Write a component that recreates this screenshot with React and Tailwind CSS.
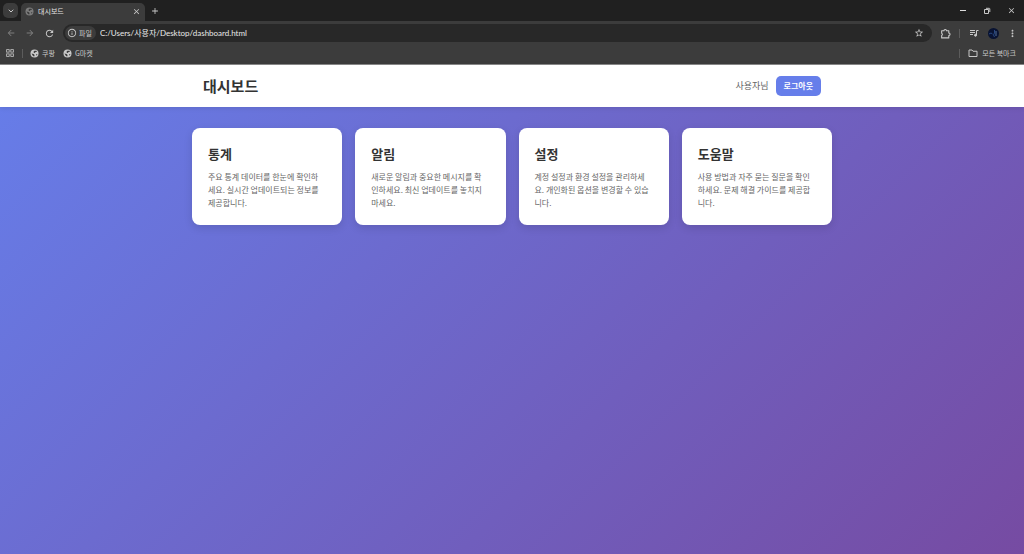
import { FiChevronDown } from 'react-icons/fi'
import {
  MdAdd,
  MdArrowBack,
  MdArrowForward,
  MdClose,
  MdInfoOutline,
  MdMoreVert,
  MdOutlineGridView,
  MdRefresh,
  MdStarBorder,
} from 'react-icons/md'

const CARDS = [
  {
    title: '통계',
    body: '주요 통계 데이터를 한눈에 확인하세요. 실시간 업데이트되는 정보를 제공합니다.',
  },
  {
    title: '알림',
    body: '새로운 알림과 중요한 메시지를 확인하세요. 최신 업데이트를 놓치지 마세요.',
  },
  {
    title: '설정',
    body: '계정 설정과 환경 설정을 관리하세요. 개인화된 옵션을 변경할 수 있습니다.',
  },
  {
    title: '도움말',
    body: '사용 방법과 자주 묻는 질문을 확인하세요. 문제 해결 가이드를 제공합니다.',
  },
]

const BOOKMARKS = ['쿠팡', 'G마켓']

function GlobeIcon({ className }) {
  return (
    <svg viewBox="0 0 18 18" className={className}>
      <circle cx="9" cy="9" r="8" fill="currentColor" />
      <path d="M9 3.5l4-.2 1 2-3 .7-1.2 2-2.2-.5-.6-2zM3 9l4.2 1 2 2-.8 3-2.4-1.2z" fill="#3c3c3c" />
      <path d="M12 10.5l2.8-.5-1.5 3.5z" fill="#3c3c3c" />
    </svg>
  )
}

function ExtensionIcon({ className }) {
  return (
    <svg viewBox="0 0 20 20" className={className} fill="none" stroke="currentColor" strokeWidth="2" strokeLinejoin="round">
      <path d="M3 5h4.2a2.3 2.3 0 0 1 4.6 0H16v4.2a2.3 2.3 0 0 1 0 4.6V18H3v-4.4a2.3 2.3 0 0 0 0-4.2z" />
    </svg>
  )
}

function MediaIcon({ className }) {
  return (
    <svg viewBox="0 0 20 20" className={className} fill="none" stroke="currentColor" strokeWidth="2">
      <path d="M2 5h10M2 9h10M2 13h6M15 14.5V5h4" />
      <circle cx="13" cy="14.5" r="2" fill="currentColor" />
    </svg>
  )
}

function FolderIcon({ className }) {
  return (
    <svg viewBox="0 0 20 20" className={className} fill="none" stroke="currentColor" strokeWidth="2" strokeLinejoin="round">
      <path d="M2 4h6l2 2.5h8V17H2z" />
    </svg>
  )
}

function TabStrip() {
  return (
    <div className="flex h-[21px] items-end bg-[#202020]">
      <button aria-label="탭 검색" className="mb-[3px] ml-[3px] flex size-[15px] items-center justify-center rounded-[5px] bg-[#3c3c3c]">
        <FiChevronDown className="size-2" strokeWidth={3} />
      </button>
      <div className="ml-[3px] flex h-[18px] w-[124px] items-center rounded-t-[5px] bg-[#3c3c3c] pr-1 pb-[2px] pl-1">
        <GlobeIcon className="size-[9px] text-[#7c7c7c]" />
        <span className="ml-1 flex-1 text-[7px] text-[#e3e3e3]">대시보드</span>
        <button aria-label="탭 닫기">
          <MdClose className="size-[9px]" />
        </button>
      </div>
      <button aria-label="새 탭" className="mb-[5px] ml-[5px]">
        <MdAdd className="size-[10px]" />
      </button>
      <div className="ml-auto flex h-full items-center gap-4 pr-2">
        <button aria-label="최소화" className="flex size-2 items-center justify-center">
          <span className="h-px w-[6px] bg-[#dddddd]" />
        </button>
        <button aria-label="이전 크기로 복원">
          <svg viewBox="0 0 8 8" className="size-2" fill="none" stroke="currentColor">
            <path d="M1.5 2.5h4v4h-4zM3 1.3h3.2q.6 0 .6.6V5" />
          </svg>
        </button>
        <button aria-label="닫기">
          <MdClose className="size-[9px]" />
        </button>
      </div>
    </div>
  )
}

function Toolbar() {
  return (
    <div className="flex h-6 items-center bg-[#3c3c3c] pr-[6px] pl-[6px]">
      <button aria-label="뒤로" className="text-[#7d7d7d]">
        <MdArrowBack className="size-[10px]" />
      </button>
      <button aria-label="앞으로" className="ml-[9px] text-[#7d7d7d]">
        <MdArrowForward className="size-[10px]" />
      </button>
      <button aria-label="새로고침" className="ml-[9px]">
        <MdRefresh className="size-[11px]" />
      </button>
      <div className="ml-2 flex h-[18px] flex-1 items-center rounded-full bg-[#282828] pr-2 pl-[2px]">
        <span className="flex h-[14px] items-center gap-[2px] rounded-full bg-[#3c3c3c] pr-1 pl-[2px] text-[7px]">
          <MdInfoOutline className="size-[10px]" />
          파일
        </span>
        <input
          aria-label="주소창"
          defaultValue="C:/Users/사용자/Desktop/dashboard.html"
          className="ml-1 min-w-0 flex-1 bg-transparent font-[Lato,'Noto_Sans_CJK_KR',sans-serif] text-[8px] text-[#e8e8e8] outline-none"
        />
        <button aria-label="북마크에 추가">
          <MdStarBorder className="size-[10px]" />
        </button>
      </div>
      <button aria-label="확장 프로그램" className="ml-2">
        <ExtensionIcon className="size-[11px]" />
      </button>
      <span className="ml-2 h-[9px] w-px bg-[#5c5c5c]" />
      <button aria-label="미디어 제어" className="ml-[9px]">
        <MediaIcon className="size-[10px]" />
      </button>
      <button aria-label="프로필" className="ml-[9px]">
        <svg viewBox="0 0 11 11" className="size-[11px]">
          <circle cx="5.5" cy="5.5" r="5.5" fill="#091332" />
          <path d="M1 6l2-1 1.5 1M6.5 2v3l-1 2 1 2" fill="none" stroke="#284780" />
          <path d="M8 3v5" stroke="#527099" />
        </svg>
      </button>
      <button aria-label="메뉴" className="ml-2">
        <MdMoreVert className="size-[11px]" />
      </button>
    </div>
  )
}

function BookmarkBar() {
  return (
    <div className="flex h-5 items-center border-b border-[#8a8a8a] bg-[#3c3c3c] pr-2 pb-[3px] pl-[5px] text-[7px]">
      <button aria-label="앱">
        <MdOutlineGridView className="size-[10px]" />
      </button>
      <span className="ml-[7px] h-[9px] w-px bg-[#5c5c5c]" />
      <nav className="ml-[7px] flex gap-2">
        {BOOKMARKS.map(name => (
          <a key={name} href="#" className="flex items-center gap-[3px]">
            <GlobeIcon className="size-[9px]" />
            {name}
          </a>
        ))}
      </nav>
      <span className="ml-auto h-[9px] w-px bg-[#5c5c5c]" />
      <button className="ml-2 flex items-center gap-[4px]">
        <FolderIcon className="size-[10px]" />
        모든 북마크
      </button>
    </div>
  )
}

function Card({ title, body }) {
  return (
    <article className="rounded-lg bg-white pt-4 pr-[18px] pb-4 pl-4 shadow-[0_3px_8px_rgba(0,0,0,0.12)]">
      <h2 className="text-[13px] leading-5 font-bold text-[#333333]">{title}</h2>
      <p className="mt-[6px] text-[8px] leading-[13px] text-[#666666]">{body}</p>
    </article>
  )
}

export default function App() {
  return (
    <div className="flex min-h-screen flex-col font-['Noto_Sans_CJK_KR',sans-serif]">
      <div className="text-[#c9c9c9]">
        <TabStrip />
        <Toolbar />
        <BookmarkBar />
      </div>

      <div className="flex-1 bg-[linear-gradient(135deg,#667eea_0%,#764ba2_100%)]">
        <header className="bg-white shadow-[0_1px_5px_rgba(0,0,0,0.1)]">
          <div className="mx-auto flex h-[42px] max-w-[640px] items-center px-[11px]">
            <h1 className="text-[15px] font-bold text-[#333333]">대시보드</h1>
            <span className="ml-auto text-[9px] text-[#666666]">사용자님</span>
            <button className="ml-[7px] h-5 rounded-[5px] bg-[#667eea] px-2 text-[8px] font-bold text-white">
              로그아웃
            </button>
          </div>
        </header>

        <main className="mx-auto mt-[21px] grid max-w-[640px] grid-cols-4 gap-[13px]">
          {CARDS.map(card => (
            <Card key={card.title} {...card} />
          ))}
        </main>
      </div>
    </div>
  )
}
